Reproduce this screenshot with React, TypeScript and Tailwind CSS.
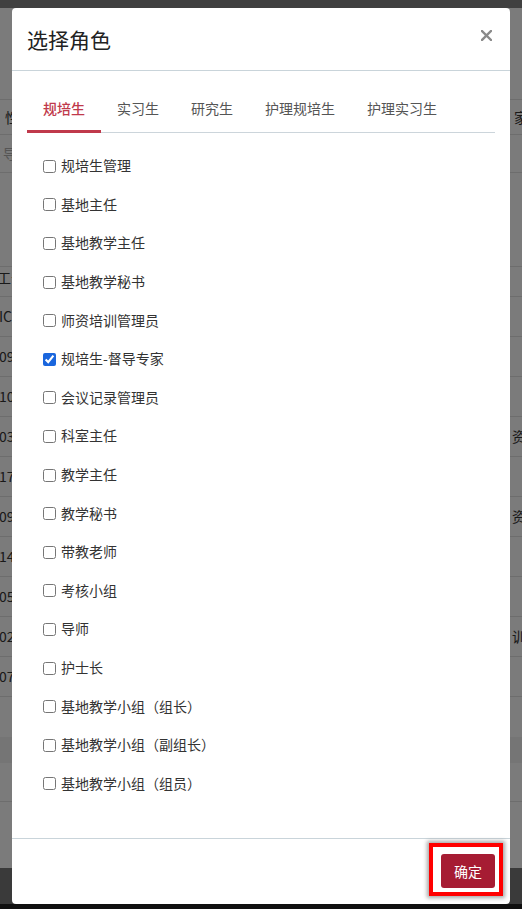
import { useState } from 'react';

const font = { fontFamily: '"Noto Sans CJK SC", "Noto Sans", sans-serif' };

const tabs = ['规培生', '实习生', '研究生', '护理规培生', '护理实习生'];

const roles = [
  '规培生管理',
  '基地主任',
  '基地教学主任',
  '基地教学秘书',
  '师资培训管理员',
  '规培生-督导专家',
  '会议记录管理员',
  '科室主任',
  '教学主任',
  '教学秘书',
  '带教老师',
  '考核小组',
  '导师',
  '护士长',
  '基地教学小组（组长）',
  '基地教学小组（副组长）',
  '基地教学小组（组员）',
];

const dataRows = [
  { left: 'IC0012', right: '' },
  { left: '0912345', right: '' },
  { left: '1023456', right: '' },
  { left: '0334567', right: '资' },
  { left: '1745678', right: '' },
  { left: '0956789', right: '资' },
  { left: '1467890', right: '' },
  { left: '0578901', right: '' },
  { left: '0289012', right: '训' },
  { left: '0790123', right: '' },
];

function BackPage() {
  return (
    <div className="flex flex-col w-full h-full bg-[#f6f6f6] text-[14px] text-[#333]" style={font}>
      <div className="h-[8px] bg-[#808080]" />
      <div className="h-[92px] border-b border-[#dadada]" />
      <div className="h-[35px] border-b border-[#dadada] flex items-center justify-between">
        <span className="ml-[5px]">性别</span>
        <span className="mr-[-6px]">家</span>
      </div>
      <div className="h-[38px] border-b border-[#dadada] flex items-center">
        <span className="ml-[3px] text-[#aaa]">导入</span>
      </div>
      <div className="h-[94px] border-b border-[#dadada]" />
      <div className="h-[30px] border-b border-[#dadada] flex items-start">
        <span className="ml-[-3px] leading-5">工号</span>
      </div>
      {dataRows.map((r, i) => (
        <div key={i} className="h-[40px] border-b border-[#dadada] flex items-center justify-between">
          <span className="ml-[-1px]">{r.left}</span>
          <span className="mr-[-4px]">{r.right}</span>
        </div>
      ))}
      <div className="h-[40px]" />
      <div className="h-[26px] bg-[#ebebeb]" />
      <div className="h-[39px] border-b border-[#dadada]" />
      <div className="h-[66px]" />
      <div className="flex-1 bg-[#757575]" />
    </div>
  );
}

export default function App() {
  const [active, setActive] = useState(0);
  const [checked, setChecked] = useState<string[]>(['规培生-督导专家']);

  const toggle = (name: string) =>
    setChecked((c) => (c.includes(name) ? c.filter((x) => x !== name) : [...c, name]));

  return (
    <div className="relative w-[522px] h-[909px] overflow-hidden bg-[#202020]" style={font}>
      <div className="h-[904px]">
        <BackPage />
      </div>
      <div className="absolute inset-0 bg-black/50" />

      <div className="absolute left-[12px] top-[8px] w-[498px] h-[896px] bg-white rounded-[4px] flex flex-col">
        <div className="h-[63px] border-b border-[#c9d4da] flex items-center justify-between px-[15px]">
          <h1 className="text-[21px] text-[#222] leading-none">选择角色</h1>
          <button className="mr-[3px] mt-[-8px]" aria-label="关闭">
            <svg width="11" height="11" viewBox="0 0 11 11">
              <path d="M1 1 L10 10 M10 1 L1 10" stroke="#8a8a8a" strokeWidth="2.4" strokeLinecap="square" />
            </svg>
          </button>
        </div>

        <div className="flex-1 px-[15px] pt-[16px]">
          <div className="flex border-b border-[#ccd5db]">
            {tabs.map((t, i) => (
              <button
                key={t}
                onClick={() => setActive(i)}
                className={
                  'px-4 pt-[11px] pb-[12px] leading-5 text-[14px] -mb-px border-b-[3px] ' +
                  (i === active ? 'border-[#c0394b] text-[#c0394b] font-medium' : 'border-transparent text-[#555]')
                }
              >
                {t}
              </button>
            ))}
          </div>

          <ul className="mt-[13px] pl-[16px]">
            {roles.map((r) => (
              <li key={r} className="h-[38.6px] flex items-center">
                <label className="flex items-center cursor-pointer">
                  <input
                    type="checkbox"
                    className="m-0 mt-[2px] w-[13px] h-[13px] accent-[#1a66dd]"
                    checked={checked.includes(r)}
                    onChange={() => toggle(r)}
                  />
                  <span className="ml-[5px] text-[14px] text-[#333] leading-5">{r}</span>
                </label>
              </li>
            ))}
          </ul>
        </div>

        <div className="relative h-[66px] border-t border-[#c9d4da] flex justify-end items-start pt-[15px] pr-[15px]">
          <button className="w-[54px] h-[34px] bg-[#a61c33] text-white text-[14px] rounded-[3px]">确定</button>
          <div className="absolute left-[417px] top-[4px] w-[74px] h-[53px] border-[4px] border-[#ff0000] shadow-[0_0_4px_2px_rgba(0,0,0,0.35)] pointer-events-none" />
        </div>
      </div>
    </div>
  );
}
